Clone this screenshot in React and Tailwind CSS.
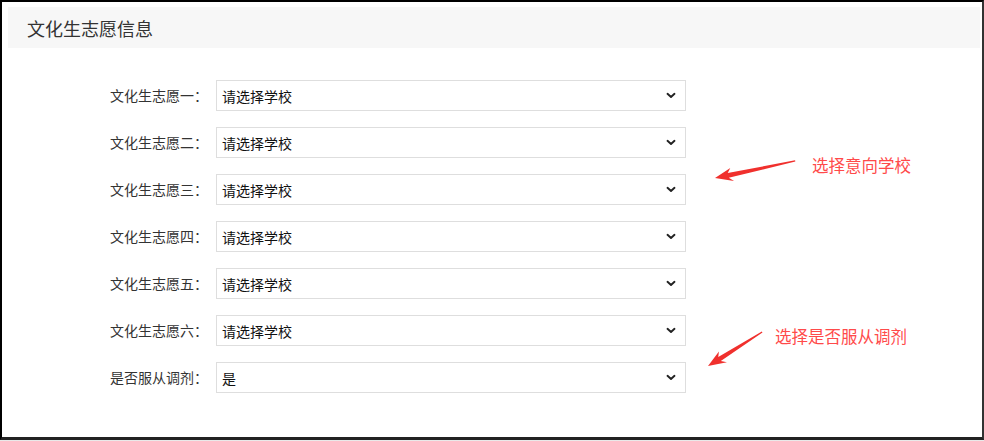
const font = { fontFamily: '"Noto Sans CJK SC", "Noto Sans", sans-serif' }

const rows = [
  { label: '文化生志愿一：', value: '请选择学校' },
  { label: '文化生志愿二：', value: '请选择学校' },
  { label: '文化生志愿三：', value: '请选择学校' },
  { label: '文化生志愿四：', value: '请选择学校' },
  { label: '文化生志愿五：', value: '请选择学校' },
  { label: '文化生志愿六：', value: '请选择学校' },
  { label: '是否服从调剂：', value: '是' },
]

const Chevron = () => (
  <svg width="10" height="7" viewBox="0 0 10 7" className="shrink-0">
    <path d="M1.5 1.8 L5 5 L8.5 1.8" fill="none" stroke="#222" strokeWidth="1.9" strokeLinecap="round" strokeLinejoin="round" />
  </svg>
)

// tapered red arrow; tip at origin, tail at (len, 0)
const Arrow = ({ x, y, angle, len }) => (
  <g transform={`translate(${x} ${y}) rotate(${angle})`}>
    <polygon
      points={`0,0 17,-6.5 13.5,-2.2 ${len},-0.6 ${len},0.6 13.5,2.6 18,7`}
      fill="#f0302d"
    />
  </g>
)

export default function App() {
  return (
    <div className="relative w-[984px] h-[441px] bg-[#e9e9e9]" style={font}>
      <div className="h-[440px] bg-white border-l-2 border-t-2 border-r-2 border-b-[3px] border-l-black border-t-black border-r-[#333] border-b-[#222] flex flex-col">
        {/* Header */}
        <div className="ml-[6px] mt-[5px] mr-[2px] h-[41px] bg-[#f7f7f7] flex items-center pl-[19px]">
          <h2 className="text-[18px] text-[#333] leading-none">文化生志愿信息</h2>
        </div>

        {/* Form rows */}
        <div className="mt-[32px] flex flex-col gap-[16px] pl-[106px]">
          {rows.map((row, i) => (
            <div key={i} className="flex items-center h-[31px]">
              <label className="w-[100px] text-right text-[14px] text-[#333] whitespace-nowrap">
                {row.label}
              </label>
              <div className="ml-[8px] w-[470px] h-[31px] border border-[#dedede] bg-white flex items-center justify-between pl-[5px] pr-[9px]">
                <span className="text-[14px] text-[#111] pt-[1px]">{row.value}</span>
                <Chevron />
              </div>
            </div>
          ))}
        </div>
      </div>

      {/* Annotations */}
      <svg className="absolute inset-0 pointer-events-none" width="984" height="441">
        <Arrow x={715} y={178} angle={-12} len={82} />
        <Arrow x={708} y={366} angle={-32.2} len={64} />
      </svg>
      <div className="absolute left-[812px] top-[154px] text-[16.5px] leading-[22px] text-[#ff4a4a] whitespace-nowrap">
        选择意向学校
      </div>
      <div className="absolute left-[775px] top-[325px] text-[16.5px] leading-[22px] text-[#ff4a4a] whitespace-nowrap">
        选择是否服从调剂
      </div>
    </div>
  )
}
